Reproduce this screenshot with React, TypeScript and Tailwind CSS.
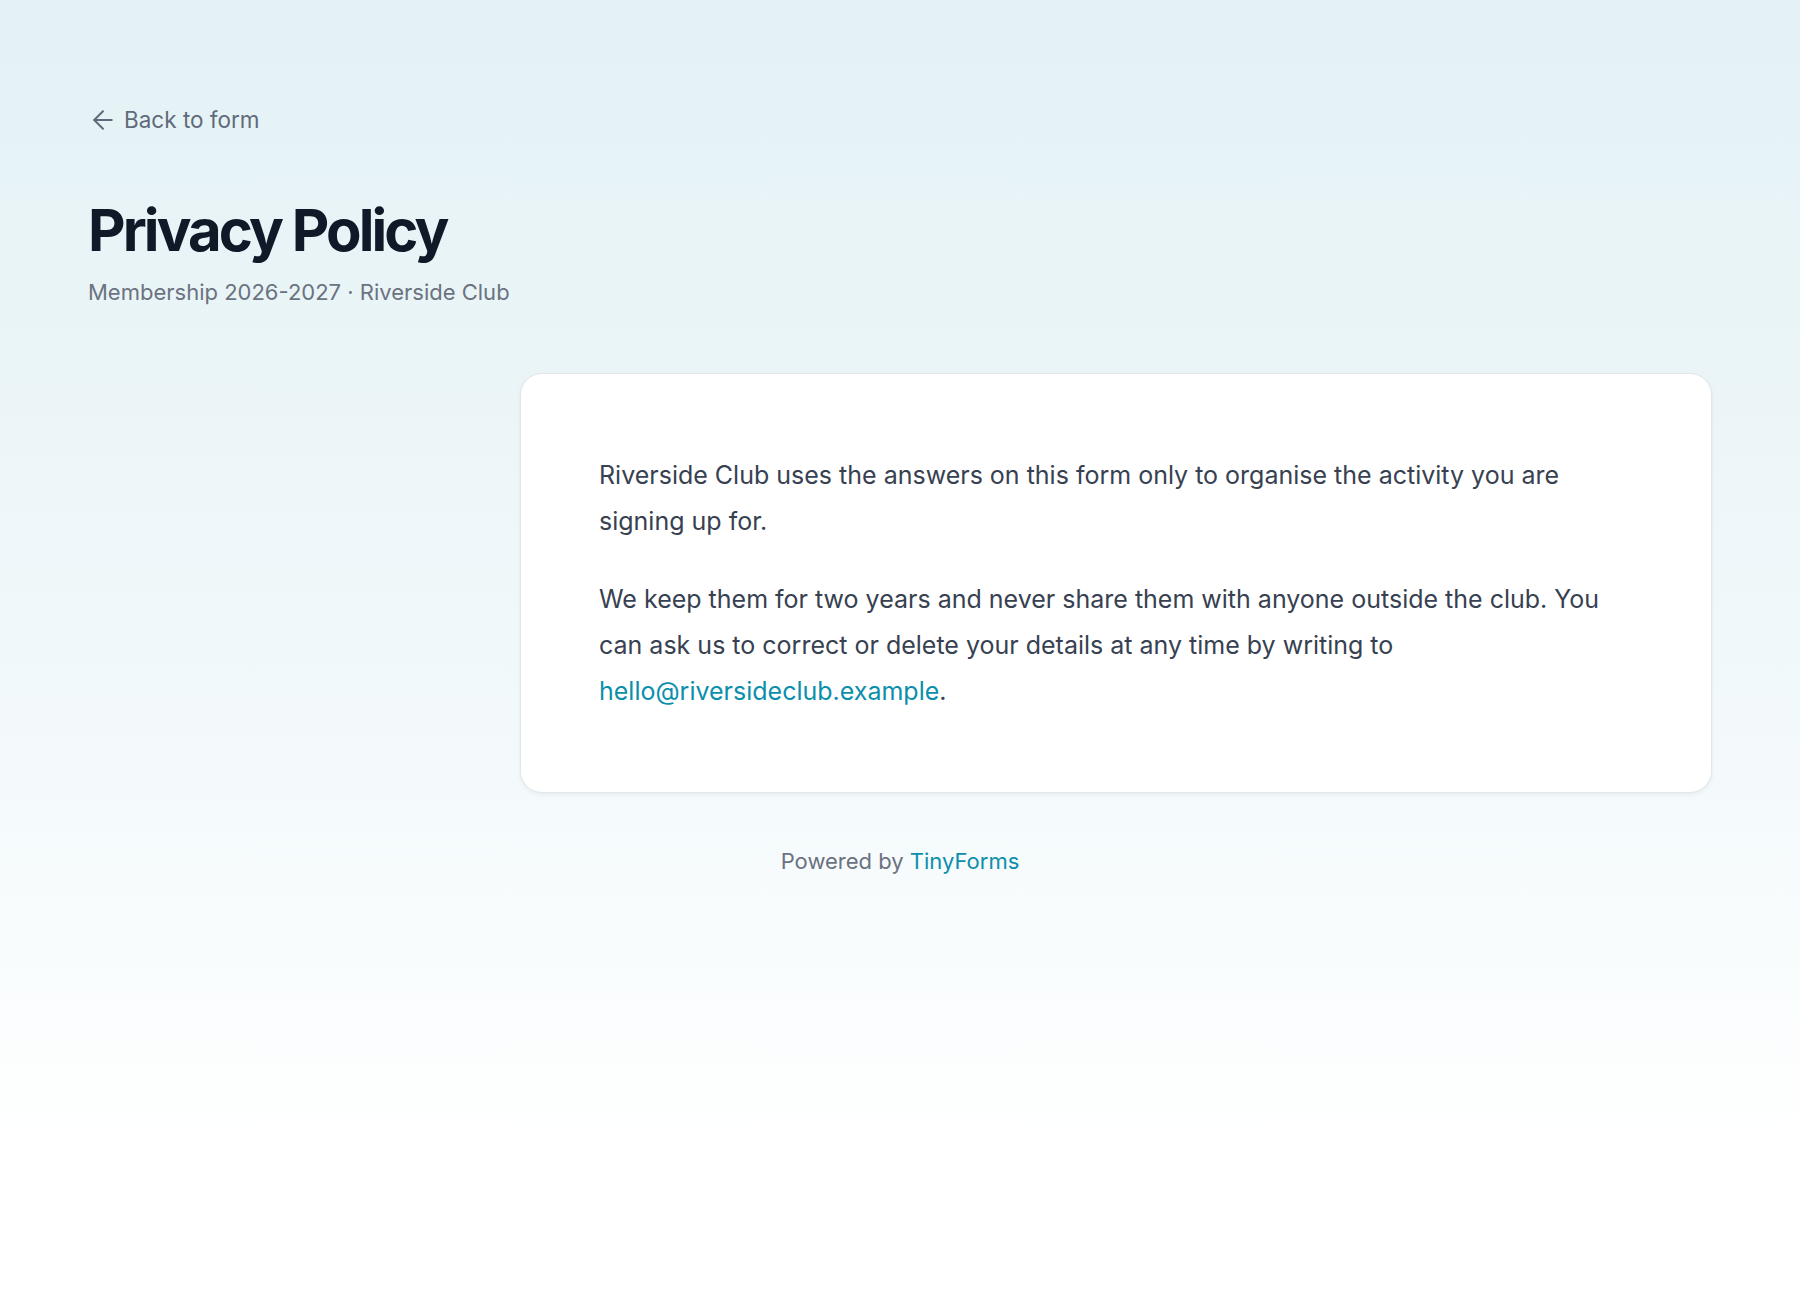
import React from "react";
import { ArrowLeft } from "lucide-react";

const fontStack = "font-['Inter','Noto_Sans',sans-serif]";

const PrivacyPolicyPage: React.FC = () => {
  return (
    <div
      className={`min-h-screen w-full bg-[linear-gradient(180deg,#e4f2f5_0%,#ebf5f8_30%,#f4fafc_60%,#ffffff_88%)] ${fontStack}`}
    >
      <div className="px-[88px] pt-[104px] pb-20">
        {/* Back link */}
        <a href="#" className="flex w-fit items-center gap-[6px] text-[22.5px] leading-[32px] text-[#5f6b7a]">
          <ArrowLeft className="h-[30px] w-[30px]" strokeWidth={1.6} />
          Back to form
        </a>

        {/* Header */}
        <h1 className="mt-[63px] text-[58px] font-bold leading-[1.1] tracking-[-0.05em] text-[#111827]">
          Privacy Policy
        </h1>
        <p className="mt-[13px] text-[22px] leading-[32px] text-[#6b7280]">
          Membership 2026-2027 · Riverside Club
        </p>

        {/* Content */}
        <div className="mt-[65px] grid grid-cols-[400px_1fr] gap-8">
          <div />
          <div className="rounded-[22px] border border-[#e3e7ec] bg-white px-[78px] py-[78px] shadow-[0_2px_4px_rgba(15,23,42,0.06)]">
            <div className="max-w-[1020px] text-[25px] leading-[46px] text-[#374151]">
              <p>
                Riverside Club uses the answers on this form only to organise the activity you are signing up for.
              </p>
              <p className="mt-8">
                We keep them for two years and never share them with anyone outside the club. You can ask us to
                correct or delete your details at any time by writing to{" "}
                <a href="#" className="text-[#0b8fab]">
                  hello@riversideclub.example
                </a>
                .
              </p>
            </div>
          </div>
        </div>

        {/* Footer */}
        <p className="mt-[52px] text-center text-[22px] leading-[32px] text-[#6b7280]">
          Powered by <span className="text-[#0b8fab]">TinyForms</span>
        </p>
      </div>
    </div>
  );
};

export default PrivacyPolicyPage;
